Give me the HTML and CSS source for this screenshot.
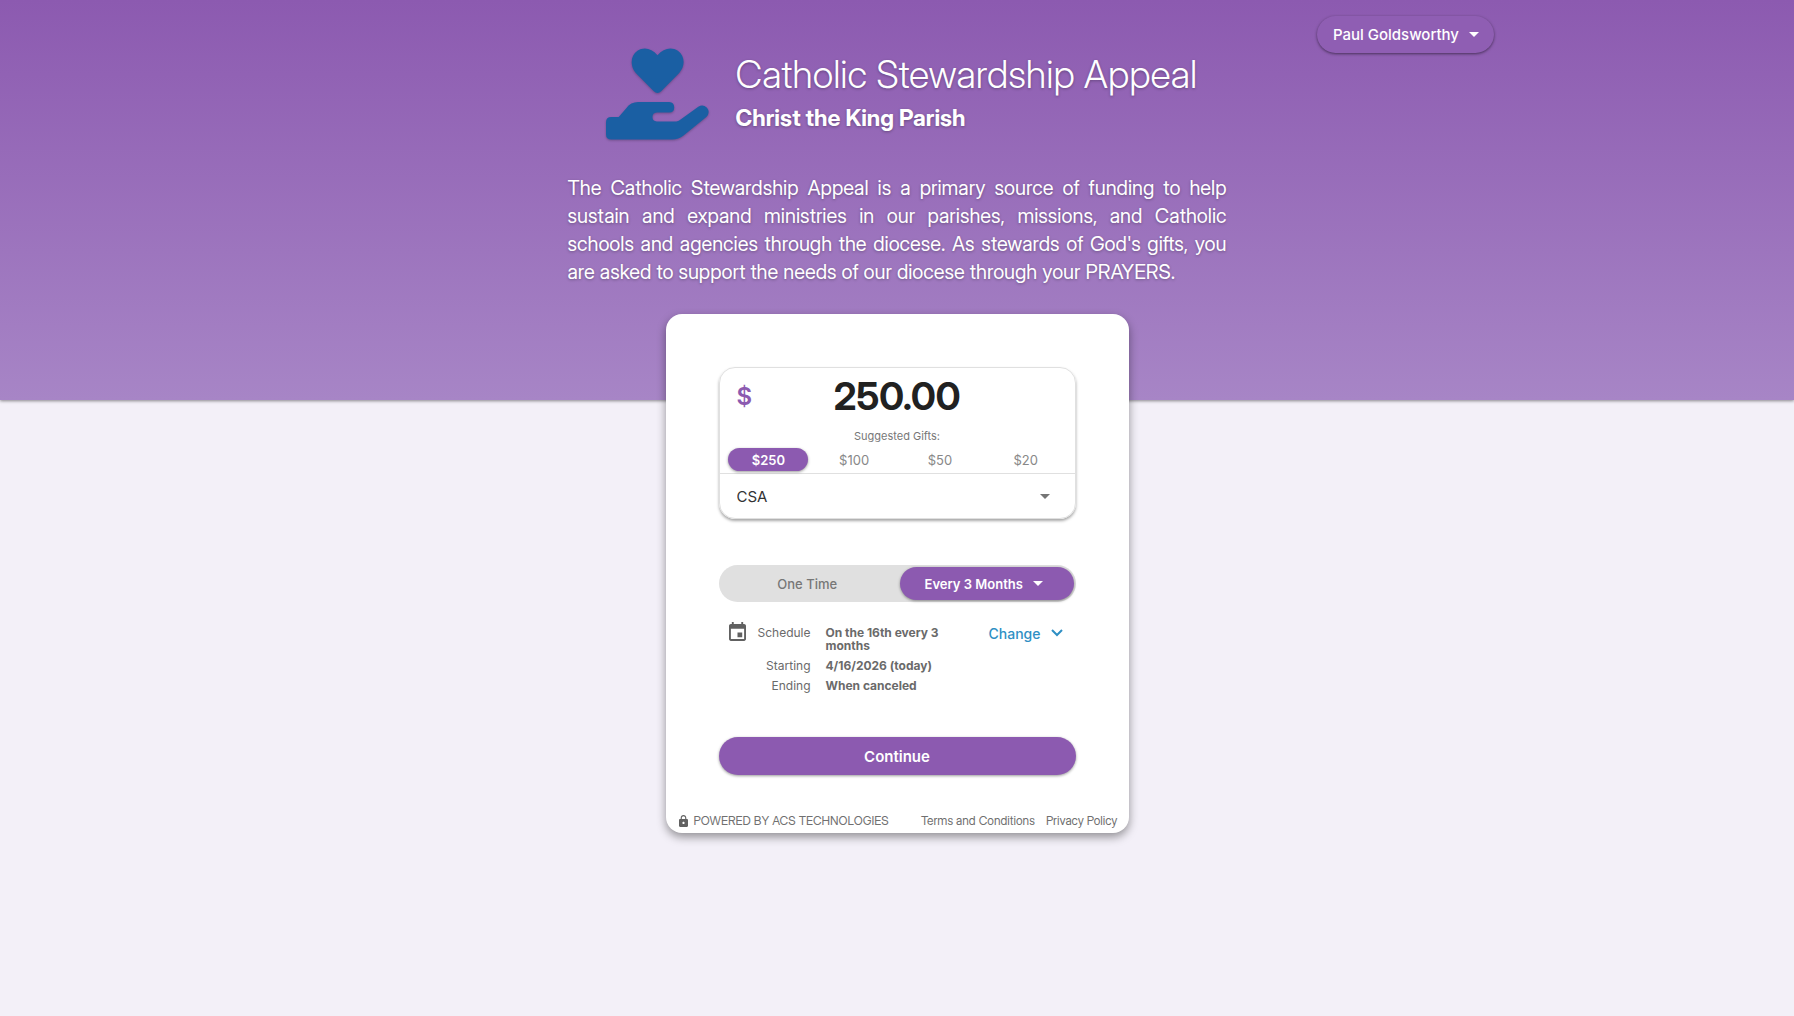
FILE: index.html
```html
<!DOCTYPE html>
<html lang="en">
<head>
<meta charset="utf-8">
<meta name="viewport" content="width=device-width, initial-scale=1">
<title>Catholic Stewardship Appeal</title>
<link rel="stylesheet" href="styles.css">
</head>
<body>
<header class="hero">
  <div class="topbar">
    <button class="user-menu" type="button">Paul Goldsworthy
      <svg class="caret" viewBox="0 0 10 5" aria-hidden="true"><path d="M0 0h10L5 5z"/></svg>
    </button>
  </div>
  <div class="intro">
    <div class="brand">
      <svg class="logo" viewBox="48 56 308 274" aria-hidden="true">
        <path d="M202 190Q196 190 191 185L137 130C119 109 121 79 142 64C161 51 184 56 202 77C220 56 244 51 263 64C284 79 286 109 267 130L213 185Q208 190 202 190Z"/>
        <path d="M64 262H86L108 236Q122 217 144 217H237Q252 218 252 233Q252 248 237 248H200Q187 249 187 262Q187 275 200 275H258Q264 275 269 271L324 231Q338 222 350 234Q361 248 348 262L280 317Q265 329 246 329H64Q48 329 48 313V278Q48 262 64 262Z"/>
      </svg>
      <div>
        <h1 class="title">Catholic Stewardship Appeal</h1>
        <p class="parish">Christ the King Parish</p>
      </div>
    </div>
    <p class="lead">The Catholic Stewardship Appeal is a primary source of funding to help sustain and expand ministries in our parishes, missions, and Catholic schools and agencies through the diocese. As stewards of God's gifts, you are asked to support the needs of our diocese through your PRAYERS.</p>
  </div>
</header>
<main class="card">
  <form class="gift">
    <section class="amount-box">
      <div class="amount-row">
        <label class="currency" for="amount">$</label>
        <input class="amount" id="amount" type="text" inputmode="decimal" value="250.00">
      </div>
      <p class="suggested">Suggested Gifts:</p>
      <div class="presets">
        <button class="preset selected" type="button">$250</button>
        <button class="preset" type="button">$100</button>
        <button class="preset" type="button">$50</button>
        <button class="preset" type="button">$20</button>
      </div>
      <div class="fund-row">
        <select class="fund" aria-label="Fund"><option>CSA</option></select>
        <svg class="caret" viewBox="0 0 10 5" aria-hidden="true"><path d="M0 0h10L5 5z"/></svg>
      </div>
    </section>
    <div class="frequency">
      <button class="freq" type="button">One Time</button>
      <button class="freq active" type="button">Every 3 Months
        <svg class="caret" viewBox="0 0 10 5" aria-hidden="true"><path d="M0 0h10L5 5z"/></svg>
      </button>
    </div>
    <section class="schedule">
      <svg class="calendar" viewBox="3 1 18 20" aria-hidden="true"><path d="M17 12h-5v5h5v-5zM16 1v2H8V1H6v2H5c-1.110 0-1.990.9-1.990 2L3 19c0 1.100.89 2 2 2h14c1.100 0 2-.9 2-2V5c0-1.100-.9-2-2-2h-1V1h-2zm3 18H5V8h14v11z"/></svg>
      <dl class="details">
        <dt>Schedule</dt><dd>On the 16th every 3 months</dd>
        <dt>Starting</dt><dd>4/16/2026 (today)</dd>
        <dt>Ending</dt><dd>When canceled</dd>
      </dl>
      <button class="change" type="button">Change
        <svg class="chevron" viewBox="0 0 12 8" aria-hidden="true"><path d="M1 1l5 5 5-5"/></svg>
      </button>
    </section>
    <button class="continue" type="submit">Continue</button>
  </form>
  <footer class="card-footer">
    <svg class="lock" viewBox="4 1 16 21" aria-hidden="true"><path d="M18 8h-1V6c0-2.760-2.240-5-5-5S7 3.240 7 6v2H6c-1.100 0-2 .9-2 2v10c0 1.100.9 2 2 2h12c1.100 0 2-.9 2-2V10c0-1.100-.9-2-2-2zm-6 9c-1.100 0-2-.9-2-2s.9-2 2-2 2 .9 2 2-.9 2-2 2zm3-9H9V6c0-1.700 1.300-3 3-3s3 1.300 3 3v2z"/></svg>
    <span class="powered">POWERED BY ACS TECHNOLOGIES</span>
    <a href="#terms">Terms and Conditions</a>
    <a href="#privacy">Privacy Policy</a>
  </footer>
</main>
</body>
</html>
```
FILE: styles.css
```css
* { box-sizing: border-box; }

body {
  margin: 0;
  min-height: 100vh;
  background: #f3f0f8;
  color: #6a6a6a;
  font-family: Inter, "Liberation Sans", sans-serif;
  font-size: 12px;
}

h1, p, dl, dd { margin: 0; }

button, input, select {
  border: 0;
  background: none;
  color: inherit;
  font: inherit;
}

button {
  display: flex;
  align-items: center;
  justify-content: center;
  padding: 0;
  cursor: pointer;
}

.title, .parish, .lead, .amount, .card-footer {
  font-family: "Inter Display", Inter, "Liberation Sans", sans-serif;
}

.caret {
  flex: none;
  width: 10px;
  height: 5px;
  fill: currentColor;
}

.hero {
  padding: 16px 20px 114px;
  background: linear-gradient(#8c5ab0, #a785c6);
  box-shadow: 0 1px 3px rgba(0, 0, 0, .45);
  color: #fff;
  text-shadow: 0 1px 3px rgba(0, 0, 0, .3);
}

.topbar {
  display: flex;
  justify-content: flex-end;
  max-width: 1194px;
  margin: 0 auto -5px;
}

.user-menu {
  gap: 10px;
  height: 37px;
  padding: 0 15px 0 16px;
  border-radius: 19px;
  background: #8f5eb3;
  box-shadow: 0 1px 3px rgba(0, 0, 0, .5);
  font-size: 15px;
  font-weight: 500;
}

.intro {
  max-width: 659px;
  margin: 0 auto;
}

.brand {
  display: flex;
  align-items: center;
  gap: 27px;
  padding-left: 38px;
}

.logo {
  flex: none;
  width: 103px;
  height: 92px;
  fill: #1a5fa3;
  filter: drop-shadow(0 1px 1px rgba(0, 0, 0, .25));
}

.title {
  font-size: 38px;
  font-weight: 300;
  line-height: 48px;
}

.parish {
  font-size: 23px;
  font-weight: 700;
  line-height: 40px;
}

.lead {
  margin-top: 34px;
  font-size: 20px;
  line-height: 28px;
  text-align: justify;
}

.card {
  display: flex;
  flex-direction: column;
  max-width: 463px;
  margin: -86px auto 0;
  border-radius: 16px;
  background: #fff;
  box-shadow: 0 4px 10px rgba(0, 0, 0, .4);
  position: relative;
}

.gift { padding: 53px 53px 0; }

.amount-box {
  overflow: hidden;
  border: 1px solid #e0e0e0;
  border-radius: 16px;
  box-shadow: 0 2px 3px rgba(0, 0, 0, .35);
}

.amount-row {
  display: grid;
  grid-template-columns: 32px 1fr 32px;
  align-items: center;
  height: 56px;
  padding: 0 17px;
}

.currency {
  color: #8c5ab0;
  font-size: 24px;
  font-weight: 600;
}

.amount {
  width: 100%;
  padding: 0;
  color: #212121;
  font-size: 38px;
  font-weight: 700;
  text-align: center;
}

.suggested {
  color: #777;
  font-size: 11px;
  line-height: 24px;
  text-align: center;
}

.presets {
  display: grid;
  grid-template-columns: repeat(4, 1fr);
  justify-items: center;
  padding: 0 6px 2px;
  border-bottom: 1px solid #e0e0e0;
}

.preset {
  width: 80px;
  height: 23px;
  border-radius: 12px;
  color: #888;
  font-size: 13px;
}

.preset.selected {
  background: #8c5ab0;
  box-shadow: 0 1px 3px rgba(0, 0, 0, .4);
  color: #fff;
  font-weight: 600;
}

.fund-row {
  display: flex;
  align-items: center;
  height: 44px;
  padding: 0 25px 0 17px;
}

.fund-row .caret { color: #757575; }

.fund {
  flex: 1;
  height: 100%;
  padding: 0;
  appearance: none;
  color: #333;
  font-size: 15px;
}

.frequency {
  display: grid;
  grid-template-columns: 1fr 1fr;
  gap: 6px;
  margin-top: 46px;
  padding: 2px;
  border-radius: 19px;
  background: #e0e0e0;
}

.freq {
  gap: 10px;
  height: 33px;
  border-radius: 17px;
  color: #777;
  font-size: 13px;
  font-weight: 500;
}

.freq.active {
  padding-right: 6px;
  background: #8c5ab0;
  box-shadow: 0 1px 3px rgba(0, 0, 0, .4);
  color: #fff;
  font-weight: 600;
}

.schedule {
  display: flex;
  align-items: flex-start;
  margin-top: 20px;
  padding: 0 13px 0 10px;
}

.calendar {
  flex: none;
  width: 17px;
  height: 19px;
  fill: #616161;
}

.details {
  display: grid;
  flex: 1;
  grid-template-columns: 65px 128px;
  gap: 7px 15px;
  padding-top: 4px;
  line-height: 13px;
}

.details dt { text-align: right; }
.details dd { font-weight: 700; }

.change {
  gap: 10px;
  height: 22px;
  color: #2f8fc4;
  font-size: 14px;
  font-weight: 500;
}

.chevron {
  width: 12px;
  height: 8px;
  fill: none;
  stroke: currentColor;
  stroke-width: 2;
}

.continue {
  width: 100%;
  height: 38px;
  margin-top: 45px;
  border-radius: 19px;
  background: #8c5ab0;
  box-shadow: 0 1px 3px rgba(0, 0, 0, .4);
  color: #fff;
  font-size: 15px;
  font-weight: 600;
}

.card-footer {
  display: flex;
  flex-wrap: wrap;
  align-items: center;
  margin-top: 35px;
  padding: 0 11px 1px 13px;
  color: #707070;
  line-height: 22px;
  white-space: nowrap;
}

.card-footer a {
  margin-left: 11px;
  color: inherit;
  text-decoration: none;
}

.lock {
  width: 9px;
  height: 12px;
  margin-right: 6px;
  fill: #616161;
}

.powered { margin-right: auto; }
```
